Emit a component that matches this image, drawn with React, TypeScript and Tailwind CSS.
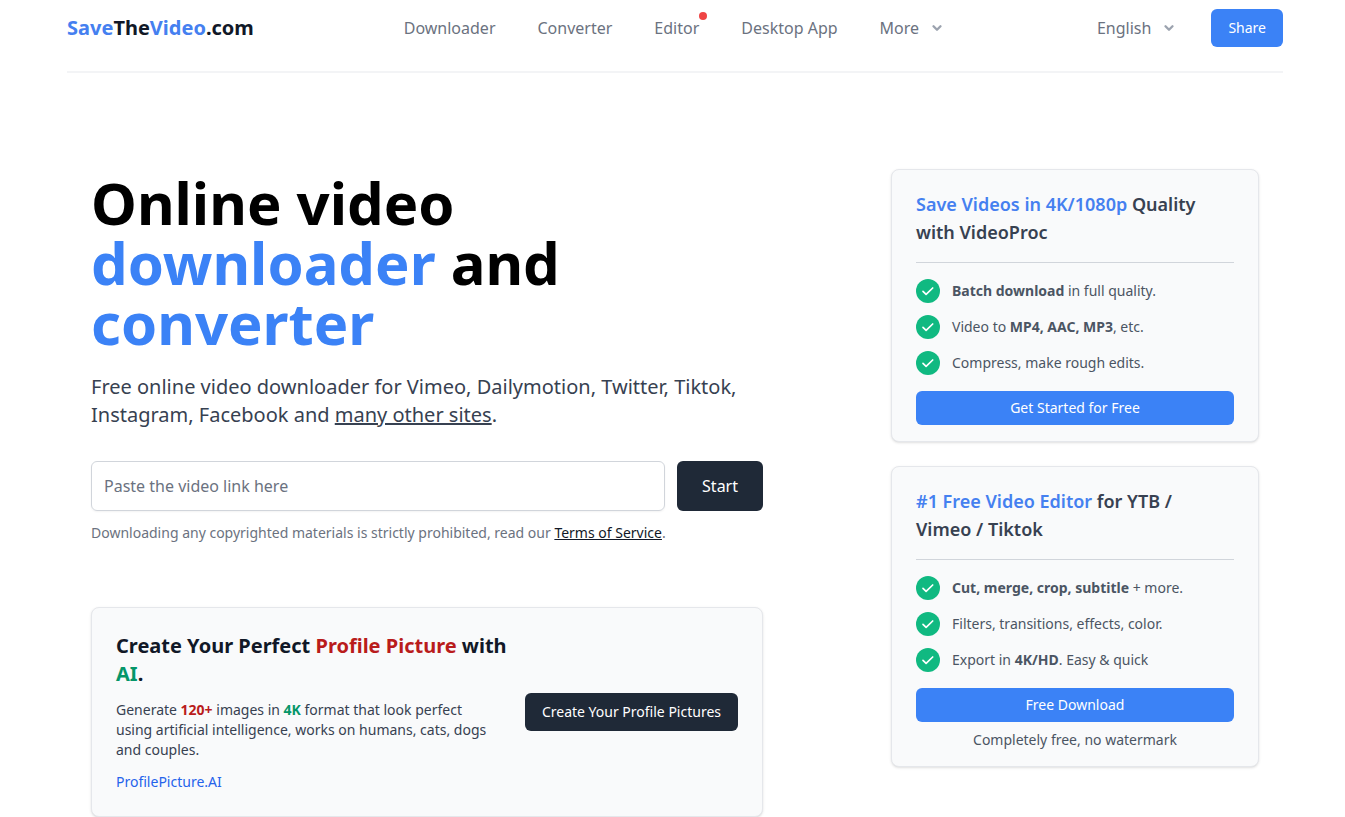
import type React from "react"
import { ChevronDown } from "lucide-react"

const navLinks = [
  { label: "Downloader", isNew: false },
  { label: "Converter", isNew: false },
  { label: "Editor", isNew: true },
  { label: "Desktop App", isNew: false },
]

const CheckIcon: React.FC = () => (
  <svg className="h-6 w-6 shrink-0" viewBox="0 0 24 24" fill="none" aria-hidden="true">
    <circle cx="12" cy="12" r="12" fill="#10b981" />
    <path d="M7 12.4l3.1 3 6.6-6.4" stroke="#fff" strokeWidth="1.7" strokeLinecap="round" strokeLinejoin="round" />
  </svg>
)

const Header: React.FC = () => (
  <header className="flex items-center justify-between border-b-2 border-[#f3f4f6] pt-[9px] pb-6">
    <a href="#" className="text-xl font-bold text-[#111827]">
      <span className="text-[#4580f0]">Save</span>The<span className="text-[#4580f0]">Video</span>.com
    </a>

    <nav className="flex items-center gap-[42px] text-base text-[#6b7280]">
      {navLinks.map((link) => (
        <a key={link.label} href="#" className="relative">
          {link.label}
          {link.isNew && <span className="absolute -top-1 -right-2 h-2 w-2 rounded-full bg-[#ef4444]" />}
        </a>
      ))}
      <button type="button" className="flex items-center gap-2">
        More
        <ChevronDown className="h-5 w-5 p-[3px] text-[#9ca3af]" strokeWidth={4} />
      </button>
    </nav>

    <div className="flex items-center gap-8">
      <button type="button" className="flex items-center gap-2 text-base text-[#6b7280]">
        English
        <ChevronDown className="h-5 w-5 p-[3px] text-[#9ca3af]" strokeWidth={4} />
      </button>
      <button type="button" className="h-[38px] rounded-md bg-[#3b82f6] px-[17px] text-sm text-white">
        Share
      </button>
    </div>
  </header>
)

const Hero: React.FC = () => (
  <section>
    <h1 className="text-[58px] leading-[60px] font-bold text-black">
      Online video
      <br />
      <span className="text-[#3b82f6]">downloader</span> and
      <br />
      <span className="text-[#3b82f6]">converter</span>
    </h1>
    <p className="mt-5 text-xl leading-7 text-[#374151]">
      Free online video downloader for Vimeo, Dailymotion, Twitter, Tiktok, Instagram, Facebook and{" "}
      <a href="#" className="underline">many other sites</a>.
    </p>

    <form className="mt-8 flex gap-3" onSubmit={(e) => e.preventDefault()}>
      <input
        type="url"
        aria-label="Video link"
        placeholder="Paste the video link here"
        className="h-[50px] min-w-0 flex-1 rounded-md border border-[#d1d5db] px-3 text-base text-[#111827] shadow-xs placeholder:text-[#6b7280]"
      />
      <button type="submit" className="rounded-md bg-[#1f2937] px-[25px] text-base text-white">
        Start
      </button>
    </form>
    <p className="mt-3 text-sm leading-5 text-[#6b7280]">
      Downloading any copyrighted materials is strictly prohibited, read our{" "}
      <a href="#" className="text-[#111827] underline">Terms of Service</a>.
    </p>
  </section>
)

const ProfilePictureCard: React.FC = () => (
  <section className="mt-16 flex items-center rounded-lg border border-[#e5e7eb] bg-[#f9fafb] p-6 shadow-sm">
    <div className="flex-1">
      <h2 className="text-xl leading-7 font-bold text-[#111827]">
        Create Your Perfect <span className="text-[#b91c1c]">Profile Picture</span> with{" "}
        <span className="text-[#059669]">AI</span>.
      </h2>
      <p className="mt-3 pr-5 text-sm leading-5 text-[#374151]">
        Generate <b className="text-[#b91c1c]">120+</b> images in <b className="text-[#059669]">4K</b> format that
        look perfect using artificial intelligence, works on humans, cats, dogs and couples.
      </p>
      <a href="#" className="mt-3 block text-sm leading-5 text-[#2563eb]">ProfilePicture.AI</a>
    </div>
    <button type="button" className="ml-3 h-[38px] shrink-0 rounded-md bg-[#1f2937] px-[17px] text-sm text-white">
      Create Your Profile Pictures
    </button>
  </section>
)

type PromoCardProps = {
  title: React.ReactNode
  features: React.ReactNode[]
  action: string
  note?: string
}

const PromoCard: React.FC<PromoCardProps> = ({ title, features, action, note }) => (
  <section className="rounded-lg border border-[#e5e7eb] bg-[#f9fafb] px-6 pt-5 pb-4 shadow-sm">
    <div className="border-b border-[#d1d5db] pb-4">
      <h2 className="pr-6 text-lg leading-7 font-semibold text-[#374151]">{title}</h2>
    </div>
    <ul className="mt-4 space-y-3 text-sm text-[#4b5563]">
      {features.map((feature, i) => (
        <li key={i} className="flex items-center gap-3">
          <CheckIcon />
          <span>{feature}</span>
        </li>
      ))}
    </ul>
    <button type="button" className="mt-4 h-[34px] w-full rounded-md bg-[#3b82f6] text-sm text-white">
      {action}
    </button>
    {note && <p className="mt-2 text-center text-sm leading-5 text-[#4b5563]">{note}</p>}
  </section>
)

const App: React.FC = () => {
  return (
    <div className="overflow-x-hidden bg-white pl-[5px] font-['Noto_Sans','Open_Sans',sans-serif]">
      <div className="mx-auto max-w-7xl px-8">
        <Header />

        <main className="mt-24 grid grid-cols-12 gap-8 px-6">
          <div className="col-span-8 max-w-2xl pt-1">
            <Hero />
            <ProfilePictureCard />
          </div>

          <aside className="col-span-4 space-y-6">
            <PromoCard
              title={<><span className="text-[#4580f0]">Save Videos in 4K/1080p</span> Quality with VideoProc</>}
              features={[
                <><b>Batch download</b> in full quality.</>,
                <>Video to <b>MP4, AAC, MP3</b>, etc.</>,
                "Compress, make rough edits.",
              ]}
              action="Get Started for Free"
            />
            <PromoCard
              title={<><span className="text-[#4580f0]">#1 Free Video Editor</span> for YTB / Vimeo / Tiktok</>}
              features={[
                <><b>Cut, merge, crop, subtitle</b> + more.</>,
                "Filters, transitions, effects, color.",
                <>Export in <b>4K/HD</b>. Easy &amp; quick</>,
              ]}
              action="Free Download"
              note="Completely free, no watermark"
            />
          </aside>
        </main>
      </div>
    </div>
  )
}

export default App
